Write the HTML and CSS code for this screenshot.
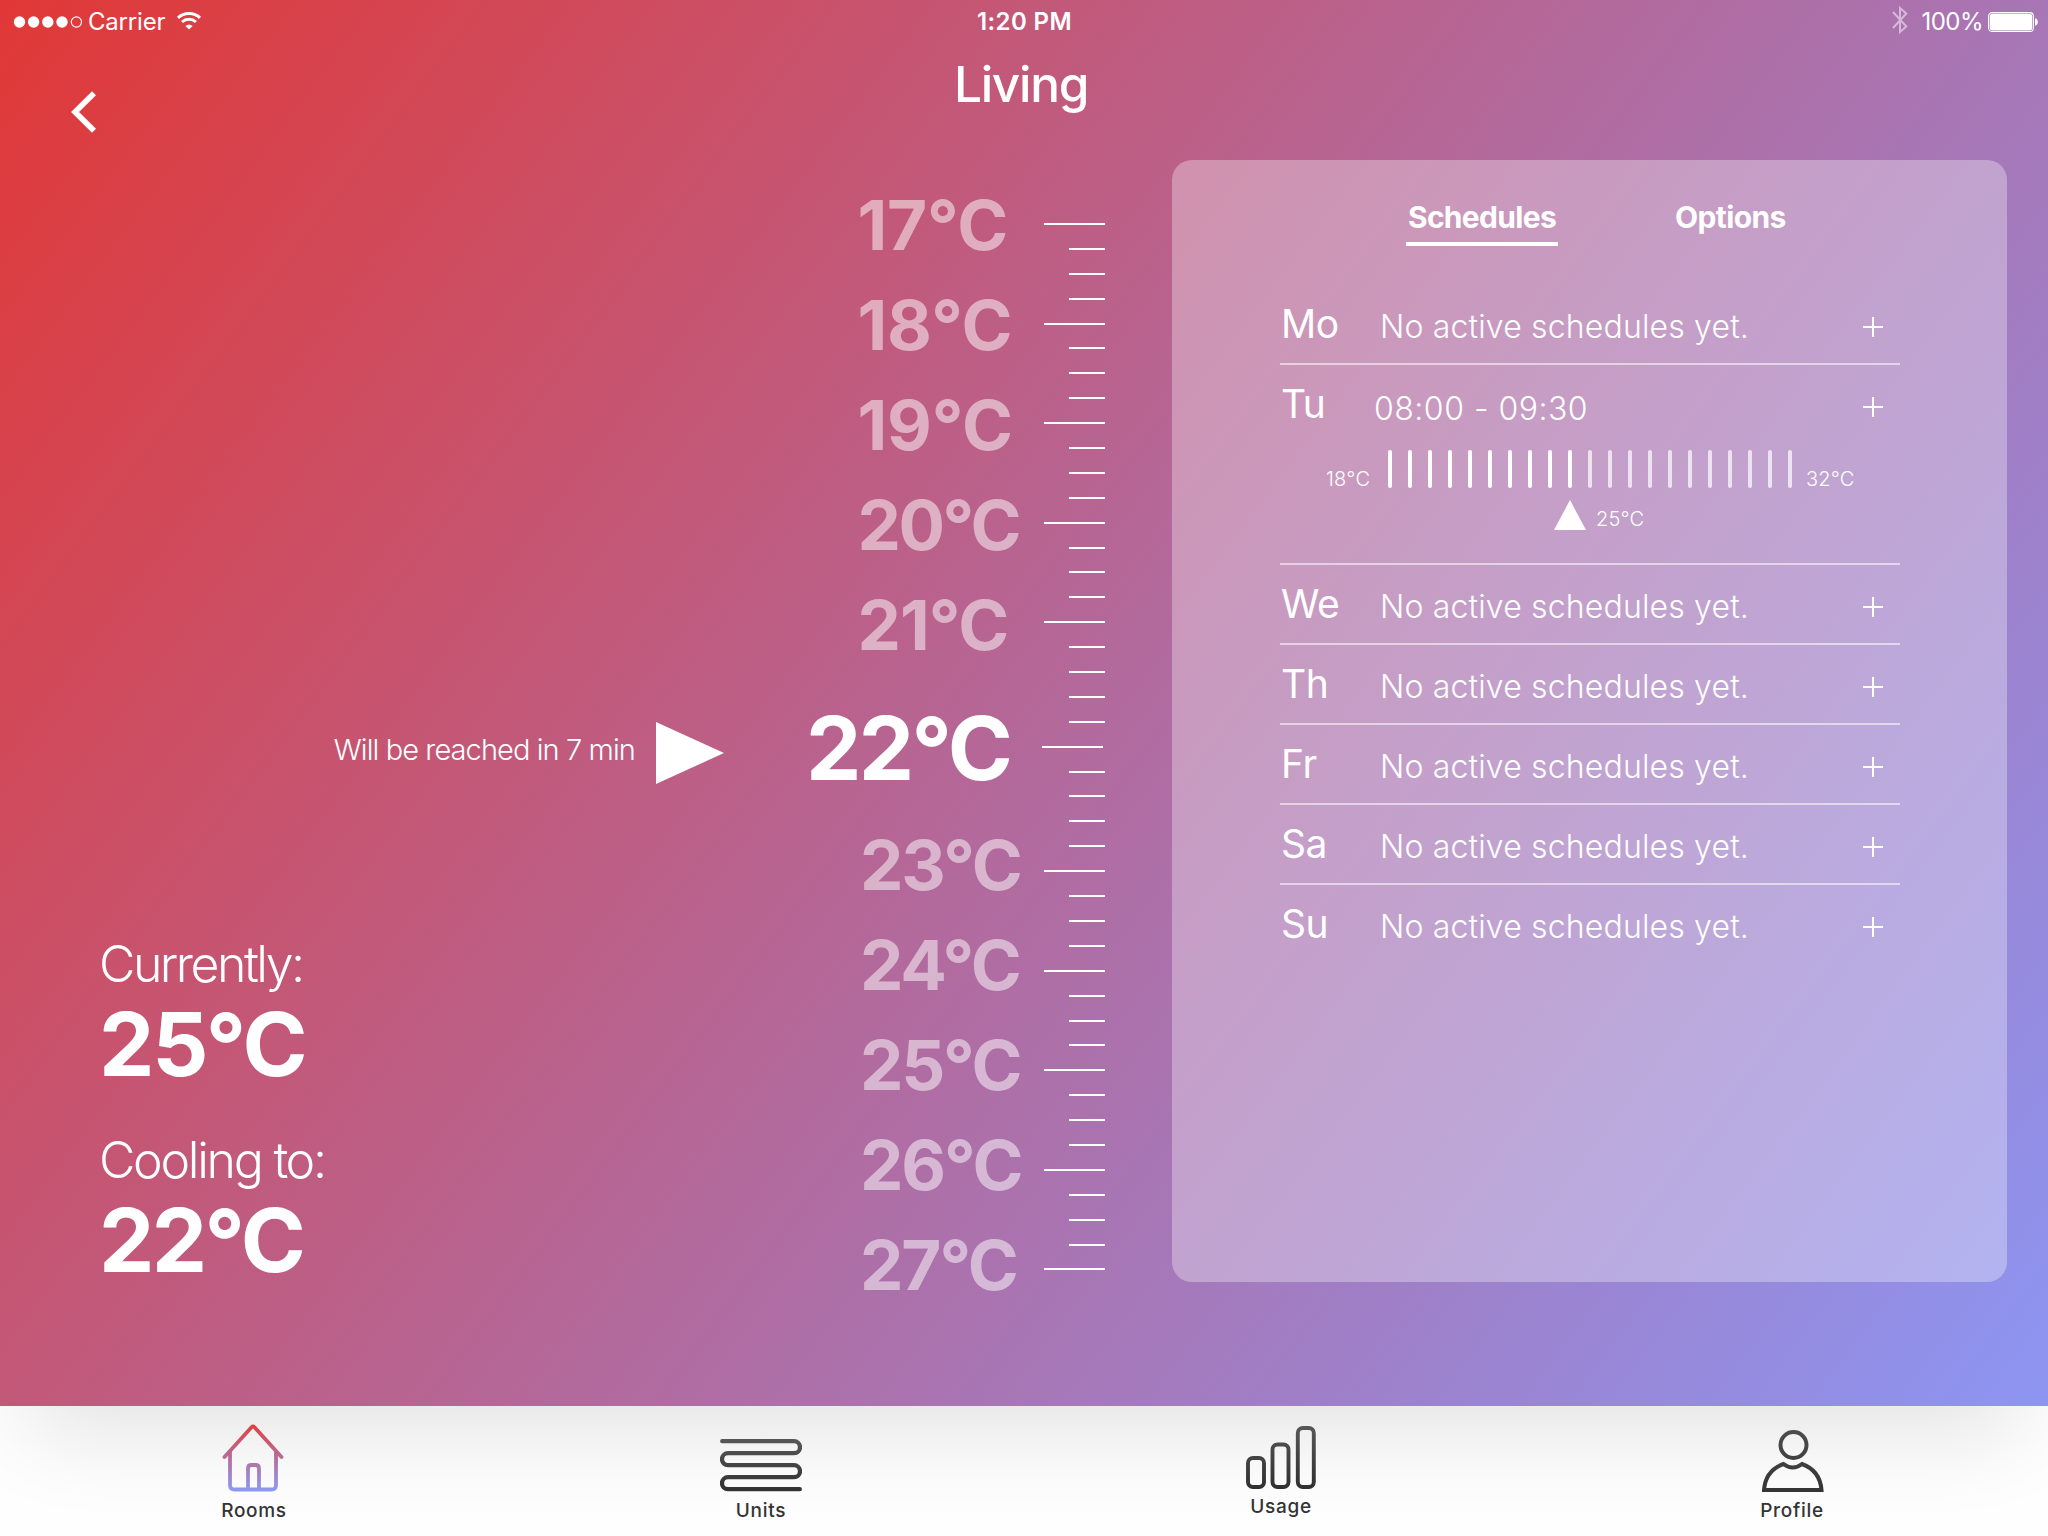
FILE: index.html
```html
<!DOCTYPE html>
<html lang="en">
<head>
<meta charset="utf-8">
<title>Living</title>
<link rel="stylesheet" href="styles.css">
</head>
<body>
<div class="screen">
  <div class="status">
    <div class="status-left">
      <svg class="signal" width="70" height="14" viewBox="0 0 70 14" fill="#fff">
        <circle cx="6.5" cy="7" r="5.7"/><circle cx="20.6" cy="7" r="5.7"/><circle cx="34.8" cy="7" r="5.7"/><circle cx="49" cy="7" r="5.7"/>
        <circle cx="63.4" cy="7" r="5.1" fill="none" stroke="#fff" stroke-width="1.1"/>
      </svg>
      <span class="carrier">Carrier</span>
      <svg class="wifi" width="24" height="18" viewBox="0 0 24 18" fill="none" stroke="#fff" stroke-width="3">
        <path d="M1 5.8C7 .2 17 .2 23 5.8"/>
        <path d="M5 10C9 6.4 15 6.4 19 10"/>
        <path d="M12 17.6L8.4 14Q12 11 15.600 14Z" fill="#fff" stroke="none"/>
      </svg>
    </div>
    <div class="clock">1:20 PM</div>
    <div class="status-right">
      <svg class="bluetooth" width="16" height="28" viewBox="0 0 16 28" fill="none" stroke="#fff" stroke-width="2">
        <path d="M1 6L14.300 20.500L8 26V2L14.300 7.500L1 22"/>
      </svg>
      <span class="charge">100%</span>
      <svg class="battery" width="50" height="20" viewBox="0 0 50 20">
        <rect x=".6" y=".6" width="44.800" height="18.800" rx="3.500" fill="none" stroke="#fff" stroke-width="1.100"/>
        <rect x="1.800" y="1.800" width="42.400" height="16.400" rx="2.500" fill="#fff"/>
        <path d="M47 6.200C49 6.600 49.800 8 49.800 10S49 13.400 47 13.800Z" fill="#fff"/>
      </svg>
    </div>
  </div>

  <header class="header">
    <svg class="back" width="26" height="42" viewBox="0 0 26 42" fill="none" stroke="#fff" stroke-width="5.600">
      <path d="M23 2.200L4 21L23 39.800"/>
    </svg>
    <h1 class="title">Living</h1>
  </header>

  <main class="main">
    <section class="info">
      <div class="hint">
        <span class="hint-text">Will be reached in 7 min</span>
        <svg width="68" height="62" viewBox="0 0 68 62" fill="#fff"><path d="M0 0L68 31L0 62Z"/></svg>
      </div>
      <div class="stats">
        <div class="stat">
          <div class="stat-label">Currently:</div>
          <div class="stat-value">25°C</div>
        </div>
        <div class="stat">
          <div class="stat-label stat-label-wide">Cooling to:</div>
          <div class="stat-value stat-value-target">22°C</div>
        </div>
      </div>
    </section>

    <ul class="temps">
      <li class="temp teen">17°C</li>
      <li class="temp teen">18°C</li>
      <li class="temp teen">19°C</li>
      <li class="temp">20°C</li>
      <li class="temp narrow">21°C</li>
      <li class="temp active">22°C</li>
      <li class="temp low">23°C</li>
      <li class="temp low">24°C</li>
      <li class="temp low">25°C</li>
      <li class="temp low">26°C</li>
      <li class="temp low">27°C</li>
    </ul>

    <div class="ruler">
      <i class="long"></i><i></i><i></i><i></i>
      <i class="long"></i><i></i><i></i><i></i>
      <i class="long"></i><i></i><i></i><i></i>
      <i class="long"></i><i></i><i></i><i></i>
      <i class="long"></i><i></i><i></i><i></i><i></i>
      <i class="long current"></i><i></i><i></i><i></i><i></i>
      <i class="long"></i><i></i><i></i><i></i>
      <i class="long"></i><i></i><i></i><i></i>
      <i class="long"></i><i></i><i></i><i></i>
      <i class="long"></i><i></i><i></i><i></i>
      <i class="long"></i>
    </div>

    <section class="panel">
      <nav class="tabs">
        <div class="tab selected">Schedules</div>
        <div class="tab">Options</div>
      </nav>
      <ul class="days">
        <li class="day"><div class="row"><span class="name">Mo</span><span class="empty">No active schedules yet.</span><span class="plus"></span></div></li>
        <li class="day expanded">
          <div class="row"><span class="name">Tu</span><span class="time">08:00 - 09:30</span><span class="plus"></span></div>
          <div class="slider">
            <span class="mark">18°C</span>
            <div class="steps"><i></i><i></i><i></i><i></i><i></i><i></i><i></i><i></i><i></i><i></i><i class="off"></i><i class="off"></i><i class="off"></i><i class="off"></i><i class="off"></i><i class="off"></i><i class="off"></i><i class="off"></i><i class="off"></i><i class="off"></i><i class="off"></i></div>
            <span class="mark">32°C</span>
          </div>
          <div class="pointer">
            <svg width="32" height="30" viewBox="0 0 32 30" fill="#fff"><path d="M16 0L32 30H0Z"/></svg>
            <span class="mark">25°C</span>
          </div>
        </li>
        <li class="day"><div class="row"><span class="name">We</span><span class="empty">No active schedules yet.</span><span class="plus"></span></div></li>
        <li class="day"><div class="row"><span class="name">Th</span><span class="empty">No active schedules yet.</span><span class="plus"></span></div></li>
        <li class="day"><div class="row"><span class="name">Fr</span><span class="empty">No active schedules yet.</span><span class="plus"></span></div></li>
        <li class="day"><div class="row"><span class="name">Sa</span><span class="empty">No active schedules yet.</span><span class="plus"></span></div></li>
        <li class="day"><div class="row"><span class="name">Su</span><span class="empty">No active schedules yet.</span><span class="plus"></span></div></li>
      </ul>
    </section>
  </main>

  <nav class="tabbar">
    <div class="item rooms">
      <svg width="62" height="68" viewBox="0 0 62 68" fill="none" stroke="url(#warm)" stroke-width="3.800" stroke-linecap="round" stroke-linejoin="round">
        <defs><linearGradient id="warm" gradientUnits="userSpaceOnUse" x1="0" y1="0" x2="0" y2="68"><stop offset="0" stop-color="#e0403f"/><stop offset="1" stop-color="#8c9bf8"/></linearGradient></defs>
        <path d="M2.500 33L29.500 3.200Q31 1.600 32.500 3.200L59.500 33"/>
        <path d="M8 28V61Q8 65.500 12.500 65.500H49.500Q54 65.500 54 61V28"/>
        <path d="M26 65V44.500Q26 41 29.500 41H33.500Q37 41 37 44.500V65"/>
      </svg>
      <span>Rooms</span>
    </div>
    <div class="item">
      <svg width="82" height="53" viewBox="0 0 82 53" fill="none" stroke="url(#dark1)" stroke-width="4.300" stroke-linecap="round">
        <defs><linearGradient id="dark1" gradientUnits="userSpaceOnUse" x1="0" y1="0" x2="0" y2="53"><stop offset="0" stop-color="#575757"/><stop offset="1" stop-color="#303030"/></linearGradient></defs>
        <path d="M2.200 2.200H74a6 6 0 0 1 0 12H8a6 6 0 0 0 0 12H74a6 6 0 0 1 0 12H8a6 6 0 0 0 0 12H79.800"/>
      </svg>
      <span>Units</span>
    </div>
    <div class="item raised">
      <svg width="70" height="63" viewBox="0 0 70 63" fill="none" stroke="url(#dark2)" stroke-width="3.900">
        <defs><linearGradient id="dark2" gradientUnits="userSpaceOnUse" x1="0" y1="0" x2="0" y2="63"><stop offset="0" stop-color="#575757"/><stop offset="1" stop-color="#303030"/></linearGradient></defs>
        <rect x="2" y="32" width="16" height="29" rx="5"/>
        <rect x="26.500" y="18.500" width="16" height="42.500" rx="5"/>
        <rect x="51.800" y="2" width="16" height="59" rx="5"/>
      </svg>
      <span>Usage</span>
    </div>
    <div class="item profile">
      <svg width="62" height="62" viewBox="0 0 62 62" fill="none" stroke="url(#dark3)" stroke-width="4">
        <defs><linearGradient id="dark3" gradientUnits="userSpaceOnUse" x1="0" y1="0" x2="0" y2="62"><stop offset="0" stop-color="#4c4c4c"/><stop offset="1" stop-color="#343434"/></linearGradient></defs>
        <circle cx="31.500" cy="15" r="13"/>
        <path d="M2 60C3 47 10.500 38 21.500 34C27.500 38.600 34 38.600 40 34C51 38 58.500 47 59.500 60Z"/>
      </svg>
      <span>Profile</span>
    </div>
  </nav>
</div>
</body>
</html>
```
FILE: styles.css
```css
* { box-sizing: border-box; }

body {
  margin: 0;
  font-family: Inter, "Liberation Sans", sans-serif;
  color: #fff;
}

ul {
  list-style: none;
  margin: 0;
  padding: 0;
}

svg { display: block; flex: none; }

.screen {
  width: 2048px;
  height: 1536px;
  overflow: hidden;
  display: flex;
  flex-direction: column;
  background: linear-gradient(126.87deg, #e13836, #b3699b 50%, #8a98f8);
}

/* status bar */
.status {
  height: 44px;
  display: grid;
  grid-template-columns: 1fr auto 1fr;
  align-items: center;
  font-size: 24px;
  line-height: 44px;
}
.status-left {
  display: flex;
  align-items: center;
  padding-left: 13px;
}
.carrier { margin-left: 5px; letter-spacing: -0.2px; }
.wifi { margin: -2px 0 0 12px; }
.clock { font-weight: 600; letter-spacing: 0.4px; padding-left: 1px; }
.status-right {
  display: flex;
  align-items: center;
  justify-content: flex-end;
  padding-right: 10px;
}
.bluetooth { opacity: 0.5; margin: -4px 13px 0 0; }
.charge { letter-spacing: -0.5px; margin-right: 5px; }

/* header */
.header {
  height: 90px;
  display: grid;
  grid-template-columns: 97px 1fr 97px;
}
.back { margin: 47px 0 0 71px; }
.title {
  margin: 0;
  padding-right: 6px;
  text-align: center;
  font-size: 49.5px;
  font-weight: 500;
  line-height: 81px;
  letter-spacing: -1.3px;
}

.main {
  height: 1272px;
  display: grid;
  grid-template-columns: 806px 237px 62px 835px;
}

/* readings */
.info { padding-top: 588px; }
.hint {
  height: 62px;
  width: 724px;
  display: flex;
  justify-content: flex-end;
}
.hint-text {
  font-size: 29px;
  font-weight: 300;
  line-height: 56px;
  letter-spacing: -0.91px;
  margin-right: 21px;
}
.stats {
  display: flex;
  flex-direction: column;
  gap: 36px;
  margin: 140px 0 0 99px;
}
.stat-label {
  font-size: 50px;
  font-weight: 300;
  line-height: 80px;
  letter-spacing: -2.49px;
}
.stat-label-wide { letter-spacing: -2.28px; }
.stat-value {
  font-size: 88px;
  font-weight: 700;
  line-height: 80px;
  letter-spacing: -2.2px;
}
.stat-value-target { letter-spacing: -2.7px; }

/* temperature dial */
.temps { padding-top: 41px; }
.temp {
  height: 100px;
  padding-left: 51.5px;
  font-size: 69px;
  font-weight: 700;
  line-height: 100px;
  letter-spacing: -2.5px;
  color: rgba(255, 255, 255, 0.5);
}
.temp.teen { letter-spacing: -0.2px; }
.temp.narrow { letter-spacing: -1px; }
.temp.low { padding-left: 54px; letter-spacing: -2.1px; }
.temp.active {
  height: 140px;
  padding: 6px 0 0;
  font-size: 88px;
  line-height: 134px;
  letter-spacing: -2.7px;
  color: #fff;
}

.ruler {
  height: 1048px;
  margin-top: 89px;
  display: flex;
  flex-direction: column;
  justify-content: space-between;
  align-items: flex-end;
}
.ruler i {
  width: 36px;
  height: 2px;
  background: #fff;
}
.ruler .long { width: 61px; }
.ruler .current { margin-right: 2px; }

/* schedule panel */
.panel {
  height: 1122px;
  margin: 26px 0 0 67px;
  width: 835px;
  padding: 32px 108px 0;
  border-radius: 20px;
  background: rgba(255, 255, 255, 0.315);
}
.tabs {
  display: flex;
  gap: 117px;
  padding-left: 126px;
}
.tab {
  height: 54px;
  font-size: 30px;
  font-weight: 700;
  line-height: 50px;
  letter-spacing: -0.6px;
}
.tab.selected {
  width: 152px;
  text-align: center;
  letter-spacing: -0.68px;
  border-bottom: 4px solid #fff;
}
.days { margin-top: 39px; width: 620px; }
.day {
  height: 80px;
  border-bottom: 2px solid rgba(255, 255, 255, 0.55);
}
.day:last-child { border-bottom: 0; }
.day.expanded { height: 200px; }
.row {
  height: 78px;
  display: grid;
  grid-template-columns: 100px 1fr 20px;
  padding-right: 17px;
  line-height: 78px;
}
.name { padding-left: 1px; font-size: 39px; letter-spacing: -0.5px; }
.empty {
  padding-top: 3px;
  font-size: 32px;
  font-weight: 300;
  letter-spacing: 0.16px;
}
.time {
  padding-top: 5px;
  margin-left: -6px;
  font-size: 32px;
  font-weight: 300;
  letter-spacing: 0.5px;
}
.plus {
  width: 20px;
  height: 20px;
  margin-top: 32px;
  background:
    linear-gradient(#fff, #fff) center / 20px 2px no-repeat,
    linear-gradient(#fff, #fff) center / 2px 20px no-repeat;
}
.slider {
  display: flex;
  align-items: flex-end;
  margin: 7px 0 0 46px;
}
.mark {
  width: 62px;
  margin-bottom: -1px;
  font-size: 20px;
  font-weight: 300;
  line-height: 20px;
  letter-spacing: 0.2px;
}
.steps {
  width: 404px;
  height: 38px;
  margin-right: 14px;
  display: flex;
  justify-content: space-between;
}
.steps i {
  width: 4px;
  border-radius: 2px;
  background: #fff;
}
.steps .off { background: rgba(255, 255, 255, 0.7); }
.pointer {
  display: flex;
  align-items: flex-end;
  gap: 10px;
  margin: 12px 0 0 274px;
}
.pointer .mark { line-height: 23px; }

/* bottom navigation */
.tabbar {
  position: relative;
  height: 130px;
  overflow: hidden;
  display: grid;
  grid-template-columns: 508px 506px 534px 488px;
  background: #fefefe;
  color: #333;
}
.tabbar::before {
  content: "";
  position: absolute;
  left: 28px;
  right: 28px;
  top: -200px;
  height: 200px;
  box-shadow: 0 28px 90px rgba(0, 0, 0, 0.105);
}
.item {
  position: relative;
  display: flex;
  flex-direction: column;
  justify-content: flex-end;
  align-items: center;
  gap: 6px;
  padding-bottom: 12px;
  font-size: 19px;
  font-weight: 500;
  line-height: 26px;
  letter-spacing: 0.7px;
}
.item.raised { gap: 5px; padding-bottom: 16px; }
.rooms svg { margin-right: 2px; }
.profile svg { margin-left: 2px; }
```
